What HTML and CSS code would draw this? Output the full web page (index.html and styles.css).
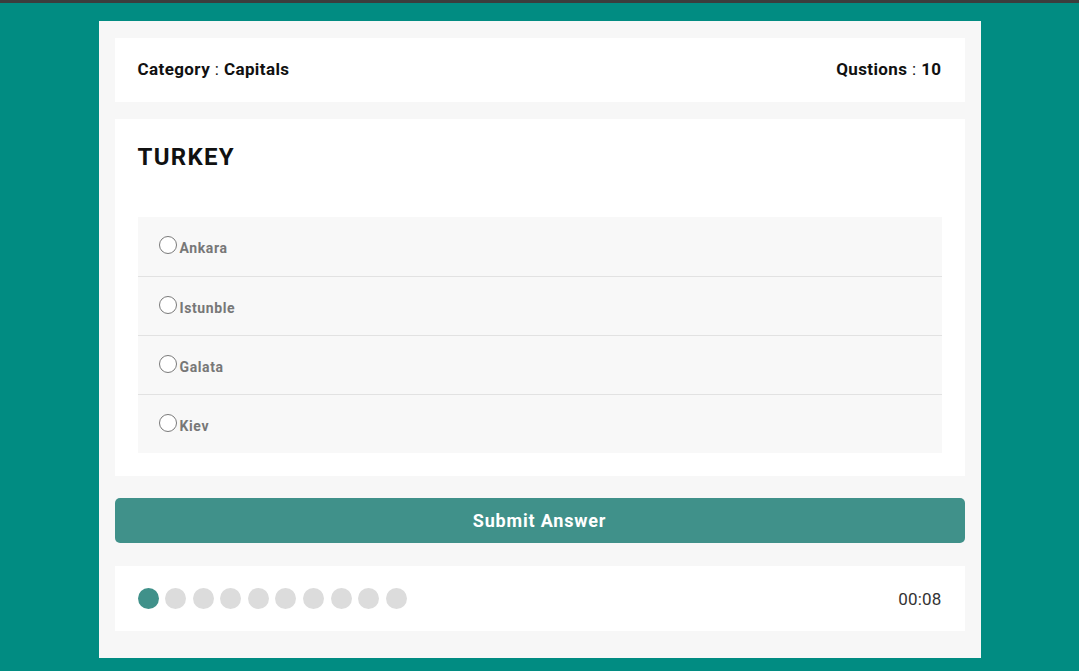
FILE: index.html
```html
<!DOCTYPE html>
<html>
<head>
<meta charset="utf-8">
<link rel="stylesheet" href="styles.css">
</head>
<body>
<div class="topbar"></div>
<main class="quiz">
  <header class="card head">
    <div><b>Category</b> : <b>Capitals</b></div>
    <div><b>Qustions</b> : <b>10</b></div>
  </header>
  <section class="card question">
    <h1 class="title">TURKEY</h1>
    <ul class="options">
      <li class="option"><span class="radio"></span><span class="label">Ankara</span></li>
      <li class="option"><span class="radio"></span><span class="label">Istunble</span></li>
      <li class="option"><span class="radio"></span><span class="label">Galata</span></li>
      <li class="option"><span class="radio"></span><span class="label">Kiev</span></li>
    </ul>
  </section>
  <button class="submit">Submit Answer</button>
  <footer class="card foot">
    <div class="dots">
      <span class="dot active"></span><span class="dot"></span><span class="dot"></span><span class="dot"></span><span class="dot"></span><span class="dot"></span><span class="dot"></span><span class="dot"></span><span class="dot"></span><span class="dot"></span>
    </div>
    <div class="timer">00:08</div>
  </footer>
</main>
</body>
</html>
```
FILE: styles.css
```css
* { box-sizing: border-box; }
html, body { margin: 0; padding: 0; }
body {
  background: #018c82;
  font-family: Roboto, "Liberation Sans", sans-serif;
  height: 671px;
  overflow: hidden;
}
.topbar { height: 3px; background: #3b3d3d; }
.quiz {
  width: 882px;
  margin: 18px auto 0;
  background: #f7f7f7;
  padding: 17px 16px 27px;
  display: flex;
  flex-direction: column;
}
.card { background: #fff; }
.head {
  height: 64px;
  padding: 0 23px 2px;
  display: flex;
  justify-content: space-between;
  align-items: center;
  font-size: 17px;
  color: #111;
  font-weight: 400;
  letter-spacing: 0.4px;
}
.head b { font-weight: 700; }
.question {
  margin-top: 17px;
  padding: 23px 23px 23px;
}
.title {
  margin: 0;
  font-size: 24px;
  line-height: 30px;
  font-weight: 700;
  color: #111;
  letter-spacing: 1.3px;
}
.options {
  list-style: none;
  margin: 45px 0 0;
  padding: 0;
  background: #f8f8f8;
}
.option {
  height: 59px;
  display: flex;
  align-items: center;
  padding: 0 21px 0 21px;
  border-top: 1px solid #e2e2e2;
}
.option:first-child { border-top: none; }
.radio {
  width: 18px;
  height: 18px;
  border: 1.5px solid #7a7a7a;
  border-radius: 50%;
  background: #fff;
  margin-right: 3px;
  margin-top: -3px;
}
.label {
  font-size: 14px;
  font-weight: 700;
  color: #777;
  margin-top: 3px;
  letter-spacing: 0.6px;
}
.submit {
  margin-top: 22px;
  height: 45px;
  border: none;
  border-radius: 5px;
  background: #40918a;
  color: #fff;
  font-family: inherit;
  font-size: 18px;
  font-weight: 700;
  letter-spacing: 0.8px;
  padding: 0;
}
.foot {
  margin-top: 23px;
  height: 65px;
  padding: 0 23px;
  display: flex;
  justify-content: space-between;
  align-items: center;
}
.dots { display: flex; gap: 6.6px; }
.dot {
  width: 21px;
  height: 21px;
  border-radius: 50%;
  background: #dcdcdc;
}
.dot.active { background: #40918a; }
.timer { font-size: 17px; color: #333; letter-spacing: 0.2px; }
```
